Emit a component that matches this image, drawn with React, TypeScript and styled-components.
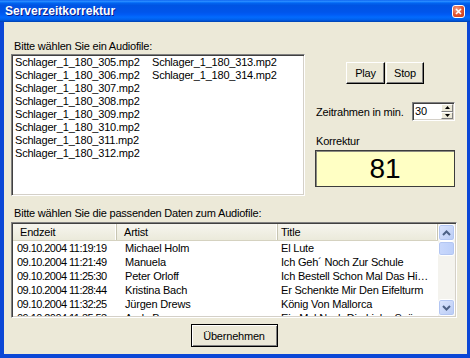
import React from 'react';
import styled, { createGlobalStyle } from 'styled-components';

const GlobalStyle = createGlobalStyle`
  html, body {
    margin: 0;
    padding: 0;
    background: #fff;
  }
  body {
    font-family: 'Liberation Sans', Arial, sans-serif;
    font-size: 11px;
    letter-spacing: -0.2px;
    color: #000;
  }
`;

const Window = styled.div`
  width: 470px;
  height: 358px;
  display: flex;
  flex-direction: column;
  background: #0b47d6;
  overflow: hidden;
`;

const TitleBar = styled.div`
  height: 22px;
  flex: none;
  display: flex;
  align-items: center;
  justify-content: space-between;
  padding: 0 5px;
  background: linear-gradient(
    180deg,
    #0058ee 0%,
    #3593ff 5%,
    #127dff 9%,
    #0262ee 15%,
    #0054e3 25%,
    #0055eb 55%,
    #005bf5 66%,
    #026afe 78%,
    #0062ef 88%,
    #0052d6 94%,
    #0040ab 100%
  );
`;

const TitleText = styled.span`
  font: bold 12px 'Liberation Sans', Arial, sans-serif;
  letter-spacing: 0;
  color: #fff;
  text-shadow: 1px 1px #0a1a8c;
`;

const CloseButton = styled.div`
  width: 13px;
  height: 13px;
  box-sizing: border-box;
  border: 1px solid #fff;
  border-radius: 3px;
  background: radial-gradient(circle at 35% 30%, #f0a086 0%, #e0512f 55%, #c23b1c 100%);
  display: flex;
  align-items: center;
  justify-content: center;
`;

const Client = styled.div`
  flex: 1;
  margin: 0 3px 4px 4px;
  background: #ece9d8;
  padding: 17px 10px 0 7px;
  display: flex;
  flex-direction: column;
`;

const TopSection = styled.div`
  display: flex;
  align-items: flex-start;
`;

const Column = styled.div`
  display: flex;
  flex-direction: column;
`;

const Label = styled.div<{ $indent?: number }>`
  line-height: 14px;
  margin-left: ${p => p.$indent ?? 0}px;
  white-space: nowrap;
`;

const sunken = `
  border: 1px solid;
  border-color: #808080 #fff #fff #808080;
  box-shadow: inset 1px 1px #404040, inset -1px -1px #d4d0c8;
`;

const FileList = styled.div`
  width: 294px;
  height: 142px;
  box-sizing: border-box;
  margin-top: 1px;
  background: #fff;
  ${sunken}
  padding: 1px 3px;
  display: grid;
  grid-auto-flow: column;
  grid-template-rows: repeat(8, 13px);
  grid-auto-columns: 137px;
`;

const FileItem = styled.div`
  line-height: 13px;
  white-space: nowrap;
`;

const SidePanel = styled.div`
  flex: 1;
  padding: 0 2px 0 10px;
  display: flex;
  flex-direction: column;
`;

const ButtonRow = styled.div`
  margin-top: 23px;
  display: flex;
  justify-content: center;
  gap: 1px;
`;

const Button = styled.div<{ $width: number; $default?: boolean }>`
  width: ${p => p.$width}px;
  height: ${p => (p.$default ? 23 : 22)}px;
  box-sizing: border-box;
  display: flex;
  align-items: center;
  justify-content: center;
  background: #ece9d8;
  border: 1px solid ${p => (p.$default ? '#000' : '#fff')};
  border-right-color: #000;
  border-bottom-color: #000;
  box-shadow: ${p =>
    p.$default
      ? 'inset 1px 1px #fff, inset -1px -1px #808080'
      : 'inset -1px -1px #808080'};
`;

const ZeitRow = styled.div`
  margin-top: 18px;
  padding-left: 1px;
  display: flex;
  align-items: center;
  justify-content: space-between;
`;

const SpinBox = styled.div`
  width: 43px;
  height: 19px;
  box-sizing: border-box;
  background: #fff;
  ${sunken}
  display: flex;
  align-items: stretch;
  padding: 1px;
`;

const SpinValue = styled.div`
  flex: 1;
  line-height: 15px;
  padding-left: 1px;
`;

const SpinButtons = styled.div`
  width: 12px;
  display: flex;
  flex-direction: column;
`;

const SpinArrow = styled.div`
  flex: 1;
  background: #ece9d8;
  border: 1px solid;
  border-color: #fff #808080 #808080 #fff;
  display: flex;
  align-items: center;
  justify-content: center;
`;

const KorrekturLabel = styled(Label)`
  margin-top: 13px;
  padding-left: 1px;
`;

const KorrekturBox = styled.div`
  margin-top: 2px;
  height: 37px;
  box-sizing: border-box;
  background: #ffffc4;
  border: 1px solid #3c3c3c;
  box-shadow: inset 1px 1px #8a8a80;
  display: flex;
  align-items: center;
  justify-content: center;
  font-size: 28px;
  letter-spacing: 0;
`;

const BottomLabel = styled(Label)`
  margin-top: 10px;
`;

const ListView = styled.div`
  margin-top: 2px;
  height: 96px;
  box-sizing: border-box;
  background: #fff;
  ${sunken}
  padding: 1px;
  display: flex;
  overflow: hidden;
`;

const Table = styled.div`
  flex: 1;
  overflow: hidden;
`;

const columns = '104px 161px 1fr';

const HeaderRow = styled.div`
  display: grid;
  grid-template-columns: ${columns};
  height: 17px;
`;

const HeaderCell = styled.div<{ $pad: number }>`
  padding-left: ${p => p.$pad}px;
  line-height: 16px;
  background: linear-gradient(#f6f5ee, #ebeadb);
  border-bottom: 1px solid #d5d2c0;
  box-shadow: inset -1px 0 #c7c5b2, inset -2px 0 #fff;
  white-space: nowrap;
`;

const Row = styled.div`
  display: grid;
  grid-template-columns: ${columns};
  height: 14px;
`;

const Cell = styled.div<{ $pad: number; $tight?: boolean }>`
  padding-left: ${p => p.$pad}px;
  padding-right: 6px;
  line-height: 14px;
  letter-spacing: ${p => (p.$tight ? '-0.55px' : '-0.2px')};
  white-space: nowrap;
  overflow: hidden;
  text-overflow: ellipsis;
`;

const ScrollBar = styled.div`
  width: 17px;
  flex: none;
  display: flex;
  flex-direction: column;
  background: #f4f3ee;
`;

const ScrollButton = styled.div`
  height: 17px;
  box-sizing: border-box;
  border: 1px solid #fff;
  border-radius: 3px;
  background: linear-gradient(135deg, #dce6fd, #b9cbf5);
  box-shadow: inset 0 0 0 1px #b3c6f2;
  display: flex;
  align-items: center;
  justify-content: center;
`;

const ScrollThumb = styled(ScrollButton)`
  height: 15px;
  background: linear-gradient(90deg, #c9d8fc, #bccffa);
`;

const Track = styled.div`
  flex: 1;
`;

const Footer = styled.div`
  margin-top: 6px;
  display: flex;
  justify-content: center;
`;

const files = [
  'Schlager_1_180_305.mp2',
  'Schlager_1_180_306.mp2',
  'Schlager_1_180_307.mp2',
  'Schlager_1_180_308.mp2',
  'Schlager_1_180_309.mp2',
  'Schlager_1_180_310.mp2',
  'Schlager_1_180_311.mp2',
  'Schlager_1_180_312.mp2',
  'Schlager_1_180_313.mp2',
  'Schlager_1_180_314.mp2',
];

const headers = [
  { title: 'Endzeit', pad: 7 },
  { title: 'Artist', pad: 7 },
  { title: 'Title', pad: 3 },
];
const rowPads = [4, 8, 3];

const rows = [
  ['09.10.2004 11:19:19', 'Michael Holm', 'El Lute'],
  ['09.10.2004 11:21:49', 'Manuela', 'Ich Geh´ Noch Zur Schule'],
  ['09.10.2004 11:25:30', 'Peter Orloff', 'Ich Bestell Schon Mal Das Himmelbett'],
  ['09.10.2004 11:28:44', 'Kristina Bach', 'Er Schenkte Mir Den Eifelturm'],
  ['09.10.2004 11:32:25', 'Jürgen Drews', 'König Von Mallorca'],
  ['09.10.2004 11:35:53', 'Andy Borg', 'Ein Mal Noch Die Liebe Spüren'],
];

const Chevron = ({ up }: { up?: boolean }) => (
  <svg width="9" height="6" viewBox="0 0 9 6">
    <path
      d={up ? 'M1 5 L4.5 1.5 L8 5' : 'M1 1 L4.5 4.5 L8 1'}
      fill="none"
      stroke="#4d6185"
      strokeWidth="2"
    />
  </svg>
);

const Tri = ({ up }: { up?: boolean }) => (
  <svg width="5" height="3" viewBox="0 0 5 3">
    <path d={up ? 'M0 3 L2.5 0 L5 3 Z' : 'M0 0 L5 0 L2.5 3 Z'} fill="#000" />
  </svg>
);

export default function App() {
  return (
    <>
      <GlobalStyle />
      <Window>
        <TitleBar>
          <TitleText>Serverzeitkorrektur</TitleText>
          <CloseButton>
            <svg width="7" height="7" viewBox="0 0 7 7">
              <path d="M1 1 L6 6 M6 1 L1 6" stroke="#fff" strokeWidth="1.6" />
            </svg>
          </CloseButton>
        </TitleBar>
        <Client>
          <TopSection>
            <Column>
              <Label $indent={3}>Bitte wählen Sie ein Audiofile:</Label>
              <FileList>
                {files.map(f => (
                  <FileItem key={f}>{f}</FileItem>
                ))}
              </FileList>
            </Column>
            <SidePanel>
              <ButtonRow>
                <Button $width={39}>Play</Button>
                <Button $width={38}>Stop</Button>
              </ButtonRow>
              <ZeitRow>
                <span>Zeitrahmen in min.</span>
                <SpinBox>
                  <SpinValue>30</SpinValue>
                  <SpinButtons>
                    <SpinArrow>
                      <Tri up />
                    </SpinArrow>
                    <SpinArrow>
                      <Tri />
                    </SpinArrow>
                  </SpinButtons>
                </SpinBox>
              </ZeitRow>
              <KorrekturLabel>Korrektur</KorrekturLabel>
              <KorrekturBox>81</KorrekturBox>
            </SidePanel>
          </TopSection>
          <BottomLabel $indent={3}>Bitte wählen Sie die passenden Daten zum Audiofile:</BottomLabel>
          <ListView>
            <Table>
              <HeaderRow>
                {headers.map(h => (
                  <HeaderCell key={h.title} $pad={h.pad}>
                    {h.title}
                  </HeaderCell>
                ))}
              </HeaderRow>
              {rows.map(r => (
                <Row key={r[0]}>
                  {r.map((c, i) => (
                    <Cell key={i} $pad={rowPads[i]} $tight={i === 0}>
                      {c}
                    </Cell>
                  ))}
                </Row>
              ))}
            </Table>
            <ScrollBar>
              <ScrollButton>
                <Chevron up />
              </ScrollButton>
              <ScrollThumb />
              <Track />
              <ScrollButton>
                <Chevron />
              </ScrollButton>
            </ScrollBar>
          </ListView>
          <Footer>
            <Button $width={87} $default>
              Übernehmen
            </Button>
          </Footer>
        </Client>
      </Window>
    </>
  );
}
